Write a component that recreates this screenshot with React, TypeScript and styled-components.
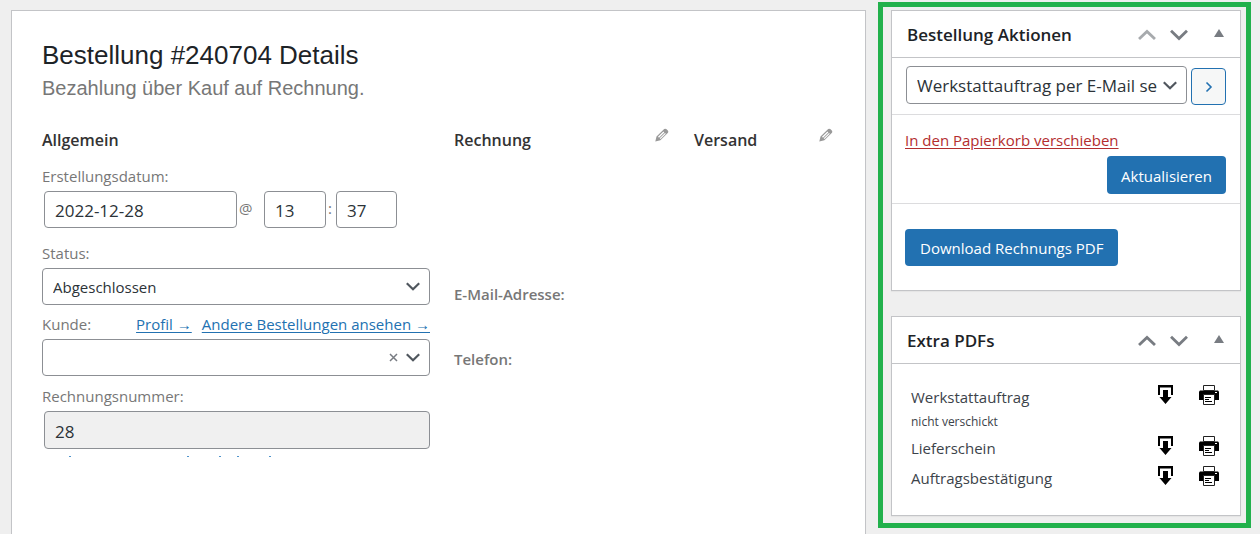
import React from "react";
import styled, { createGlobalStyle, css } from "styled-components";

const GlobalStyle = createGlobalStyle`
  *, *::before, *::after { box-sizing: border-box; }
  body {
    margin: 0;
    background: #efefef;
    color: #3c434a;
    font-family: "Open Sans", "Noto Sans", sans-serif;
    font-size: 15px;
    line-height: 20px;
  }
  button, input, select { font: inherit; color: inherit; margin: 0; }
  h1, h2, h3, p { margin: 0; }
`;

const Page = styled.div`
  display: grid;
  grid-template-columns: minmax(0, 1fr) 373px;
  gap: 12px;
  min-height: 100vh;
  padding: 2px 9px 0 11px;
`;

const panel = css`
  background: #fff;
  border: 1px solid #c3c4c7;
  box-shadow: 0 1px 1px rgba(0, 0, 0, 0.04);
`;

const OrderPanel = styled.main`
  ${panel}
  border-bottom: 0;
  margin-top: 8px;
  padding: 28px 31px 0 30px;
`;

const Title = styled.h1`
  color: #1d2327;
  font: 400 26px/32px "Liberation Sans", Arial, sans-serif;
`;

const Subtitle = styled.p`
  color: #777;
  font: 400 20px/24px "Liberation Sans", Arial, sans-serif;
  margin-top: 5px;
`;

const Columns = styled.div`
  display: grid;
  grid-template-columns: 388fr 216fr 140fr;
  gap: 24px;
  margin-top: 28px;
  color: #777;
`;

const Column = styled.section`
  display: flex;
  flex-direction: column;
`;

const ColumnHead = styled.div`
  display: flex;
  justify-content: space-between;
  align-items: flex-start;
  padding-right: 1px;
`;

const ColumnTitle = styled.h3`
  color: #333;
  font-size: 16px;
  font-weight: 600;
  line-height: 24px;
`;

const IconButton = styled.button`
  display: flex;
  padding: 0;
  border: 0;
  background: none;
  color: ${(p) => p.color || "#787c82"};
`;

const Field = styled.div<{ $gap: number }>`
  margin-top: ${(p) => p.$gap}px;
`;

const LabelRow = styled.div`
  display: flex;
  justify-content: space-between;
  margin-bottom: 5px;
`;

const Links = styled.span`
  display: flex;
  gap: 10px;
`;

const Link = styled.a`
  color: #2271b1;
  text-underline-offset: 2px;
`;

const inputBox = css`
  height: 37px;
  border: 1px solid #8c8f94;
  border-radius: 4px;
  background: #fff;
  color: #2c3338;
  padding: 0 10px;
`;

const Input = styled.input<{ $width?: string }>`
  ${inputBox}
  width: ${(p) => p.$width || "100%"};
  padding-top: 2px;
  font-size: 17px;
  &:read-only { background: #f0f0f0; height: 38px; }
`;

const Indent = styled.div`
  display: flex;
  align-items: center;
  margin-left: 2px;
`;

const Separator = styled.span<{ $width: number }>`
  width: ${(p) => p.$width}px;
  padding: 0 0 3px 2px;
`;

const SelectWrap = styled.div`
  display: grid;
  grid-template-columns: minmax(0, 1fr);
  align-items: center;
  > * { grid-area: 1 / 1; }
  > svg { justify-self: end; pointer-events: none; margin-right: 10px; color: #50575e; }
`;

const Select = styled.select<{ $large?: boolean }>`
  ${inputBox}
  appearance: none;
  width: 100%;
  padding-right: 29px;
  ${(p) => p.$large && "height: 38px; font-size: 17px; padding-top: 2px;"}
`;

const ClearButton = styled(IconButton)`
  justify-self: end;
  margin-right: 32px;
`;

const ClippedRow = styled.div`
  height: 2px;
  margin: 6px 0 0 26px;
  display: flex;
  svg { display: block; }
`;

const Contact = styled.p<{ $gap: number }>`
  font-weight: 600;
  margin-top: ${(p) => p.$gap}px;
`;

const Sidebar = styled.aside`
  align-self: start;
  border: 5px solid #22b14c;
  padding: 3px 5px 7px 8px;
  display: flex;
  flex-direction: column;
  gap: 25px;
`;

const Box = styled.section`
  ${panel}
`;

const BoxHead = styled.header`
  display: flex;
  align-items: center;
  height: 47px;
  padding: 2px 6px 0 15px;
  border-bottom: 1px solid #c3c4c7;
`;

const BoxTitle = styled.h2`
  flex: 1;
  color: #1d2327;
  font-size: 17px;
  font-weight: 600;
`;

const Controls = styled.div`
  display: flex;
  align-items: center;
  gap: 14px;
`;

const Section = styled.div`
  padding: 8px 14px;
  & + & { border-top: 1px solid #dcdcde; }
`;

const ActionRow = styled(Section)`
  display: grid;
  grid-template-columns: minmax(0, 1fr) 35px;
  gap: 4px;
  align-items: start;
  padding-bottom: 9px;
`;

const ApplyButton = styled.button`
  display: grid;
  place-items: center;
  height: 37px;
  margin-top: 2px;
  padding: 0;
  border: 1px solid #2271b1;
  border-radius: 4px;
  background: #f6f7f7;
  color: #2271b1;
`;

const SubmitSection = styled(Section)`
  display: flex;
  flex-direction: column;
  align-items: flex-start;
  padding-top: 15px;
  padding-left: 13px;
  padding-bottom: 9px;
  gap: 6px;
`;

const TrashLink = styled(Link)`
  color: #b32d2e;
`;

const PrimaryButton = styled.button<{ $end?: boolean }>`
  height: ${(p) => (p.$end ? 38 : 37)}px;
  padding: ${(p) => (p.$end ? "2px 14px 0" : "0 15px")};
  border: 0;
  border-radius: 4px;
  background: #2271b1;
  color: #fff;
  white-space: nowrap;
  ${(p) => p.$end && "align-self: flex-end;"}
`;

const DownloadSection = styled(Section)`
  padding: 25px 13px 24px;
`;

const PdfList = styled.ul`
  list-style: none;
  margin: 0;
  padding: 19px 20px 21px 19px;
`;

const PdfItem = styled.li`
  display: grid;
  grid-template-columns: 1fr 22px 22px;
  column-gap: 22px;
  min-height: 30px;
  align-items: start;
  > button { padding-top: 1px; }
`;

const PdfName = styled.div`
  padding-top: 4px;
`;

const PdfNote = styled.small`
  display: block;
  font-size: 12px;
  line-height: 22px;
  padding: 4px 0 1px;
`;

const Chevron = ({ w = 14, h = 9, up = false }: { w?: number; h?: number; up?: boolean }) => (
  <svg width={w} height={h} viewBox="0 0 14 9" fill="none" stroke="currentColor" strokeWidth="2.2">
    <path d={up ? "M.8 7.600 7 1.800l6.200 5.800" : "M.8 1.200 7 7.200l6.200-6"} />
  </svg>
);

const Pencil = () => (
  <svg width="14" height="14" viewBox="0 0 14 14" fill="#999">
    <path
      fillRule="evenodd"
      d="M.3 13.500 1.500 8.500 9.200 1Q10.500.2 11.600 1.200L12.800 2.400Q13.800 3.500 13 4.700L5.400 12.200ZM3 8.700 4 9.700 9.300 4.400 8.400 3.500ZM4.700 10.300 5.500 11 10.800 5.800 10 5Z"
    />
  </svg>
);

const DownloadIcon = () => (
  <svg width="22" height="22" viewBox="0 0 22 22">
    <path fill="#000" d="M4 1h15v10h-2V3.500H6V11H4ZM9 6h5v7h3.500l-6 7-6-7H9Z" />
  </svg>
);

const PrinterIcon = () => (
  <svg width="22" height="22" viewBox="0 0 22 22">
    <path fill="#000" d="M1 7.500 2 6.500h18l1 1V16H1Z" />
    <path fill="#fff" stroke="#222" d="M5.500 1.500h11v5h-11ZM5.500 10.500h11v10h-11Z" />
    <path stroke="#000" d="M7 13.500h6M7 15.500h4M7 17.500h7" />
    <path fill="#fff" d="M17 8h2v1h-2Z" />
  </svg>
);

const BoxHeader = ({ title, first }: { title: string; first?: boolean }) => (
  <BoxHead>
    <BoxTitle>{title}</BoxTitle>
    <Controls>
      <IconButton aria-label="Nach oben" color={first ? "#a7aaad" : undefined}>
        <Chevron w={18} h={12} up />
      </IconButton>
      <IconButton aria-label="Nach unten"><Chevron w={18} h={12} /></IconButton>
      <IconButton aria-label="Umschalten">
        <svg width="32" height="12" viewBox="0 0 32 12"><path fill="currentColor" d="M12 8 17 0l5 8Z" /></svg>
      </IconButton>
    </Controls>
  </BoxHead>
);

const pdfs = [
  { name: "Werkstattauftrag", note: "nicht verschickt" },
  { name: "Lieferschein" },
  { name: "Auftragsbestätigung" },
];

export default function App() {
  return (
    <>
      <GlobalStyle />
      <Page>
        <OrderPanel>
          <Title>Bestellung #240704 Details</Title>
          <Subtitle>Bezahlung über Kauf auf Rechnung.</Subtitle>
          <Columns>
            <Column>
              <ColumnTitle>Allgemein</ColumnTitle>
              <Field $gap={14}>
                <LabelRow><label htmlFor="date">Erstellungsdatum:</label></LabelRow>
                <Indent>
                  <Input id="date" $width="193px" defaultValue="2022-12-28" />
                  <Separator $width={27}>@</Separator>
                  <Input aria-label="Stunde" $width="62px" defaultValue="13" />
                  <Separator $width={10}>:</Separator>
                  <Input aria-label="Minute" $width="61px" defaultValue="37" />
                </Indent>
              </Field>
              <Field $gap={15}>
                <LabelRow><label htmlFor="status">Status:</label></LabelRow>
                <SelectWrap>
                  <Select id="status"><option>Abgeschlossen</option></Select>
                  <Chevron />
                </SelectWrap>
              </Field>
              <Field $gap={9}>
                <LabelRow>
                  <label htmlFor="customer">Kunde:</label>
                  <Links>
                    <Link href="#profil">Profil →</Link>
                    <Link href="#bestellungen">Andere Bestellungen ansehen →</Link>
                  </Links>
                </LabelRow>
                <SelectWrap>
                  <Select id="customer"><option></option></Select>
                  <ClearButton aria-label="Entfernen">
                    <svg width="9" height="9" viewBox="0 0 9 9" stroke="currentColor" strokeWidth="1.500"><path d="m1 1 7 7m0-7-7 7" /></svg>
                  </ClearButton>
                  <Chevron />
                </SelectWrap>
              </Field>
              <Field $gap={10}>
                <LabelRow><label htmlFor="number">Rechnungsnummer:</label></LabelRow>
                <Indent><Input id="number" readOnly value="28" /></Indent>
              </Field>
              <ClippedRow>
                <svg width="206" height="2" viewBox="0 0 206 2" fill="#4f94cc">
                  <path d="M1 1h2v1H1ZM119 1h2v1h-2ZM151 1h2v1h-2ZM169 1h2v1h-2ZM201 1h2v1h-2Z" />
                </svg>
              </ClippedRow>
            </Column>
            <Column>
              <ColumnHead>
                <ColumnTitle>Rechnung</ColumnTitle>
                <IconButton aria-label="Rechnung bearbeiten"><Pencil /></IconButton>
              </ColumnHead>
              <Contact $gap={132}>E-Mail-Adresse:</Contact>
              <Contact $gap={45}>Telefon:</Contact>
            </Column>
            <Column>
              <ColumnHead>
                <ColumnTitle>Versand</ColumnTitle>
                <IconButton aria-label="Versand bearbeiten"><Pencil /></IconButton>
              </ColumnHead>
            </Column>
          </Columns>
        </OrderPanel>
        <Sidebar>
          <Box>
            <BoxHeader title="Bestellung Aktionen" first />
            <ActionRow>
              <SelectWrap>
                <Select $large aria-label="Aktion"><option>Werkstattauftrag per E-Mail senden</option></Select>
                <Chevron />
              </SelectWrap>
              <ApplyButton aria-label="Anwenden">
                <svg width="8" height="12" viewBox="0 0 8 12" fill="none" stroke="currentColor" strokeWidth="1.600"><path d="m1.500 1.500 4.500 4.500-4.500 4.500" /></svg>
              </ApplyButton>
            </ActionRow>
            <SubmitSection>
              <TrashLink href="#papierkorb">In den Papierkorb verschieben</TrashLink>
              <PrimaryButton $end>Aktualisieren</PrimaryButton>
            </SubmitSection>
            <DownloadSection>
              <PrimaryButton>Download Rechnungs PDF</PrimaryButton>
            </DownloadSection>
          </Box>
          <Box>
            <BoxHeader title="Extra PDFs" />
            <PdfList>
              {pdfs.map((p) => (
                <PdfItem key={p.name}>
                  <PdfName>
                    {p.name}
                    {p.note && <PdfNote>{p.note}</PdfNote>}
                  </PdfName>
                  <IconButton aria-label={`${p.name} herunterladen`}><DownloadIcon /></IconButton>
                  <IconButton aria-label={`${p.name} drucken`}><PrinterIcon /></IconButton>
                </PdfItem>
              ))}
            </PdfList>
          </Box>
        </Sidebar>
      </Page>
    </>
  );
}
